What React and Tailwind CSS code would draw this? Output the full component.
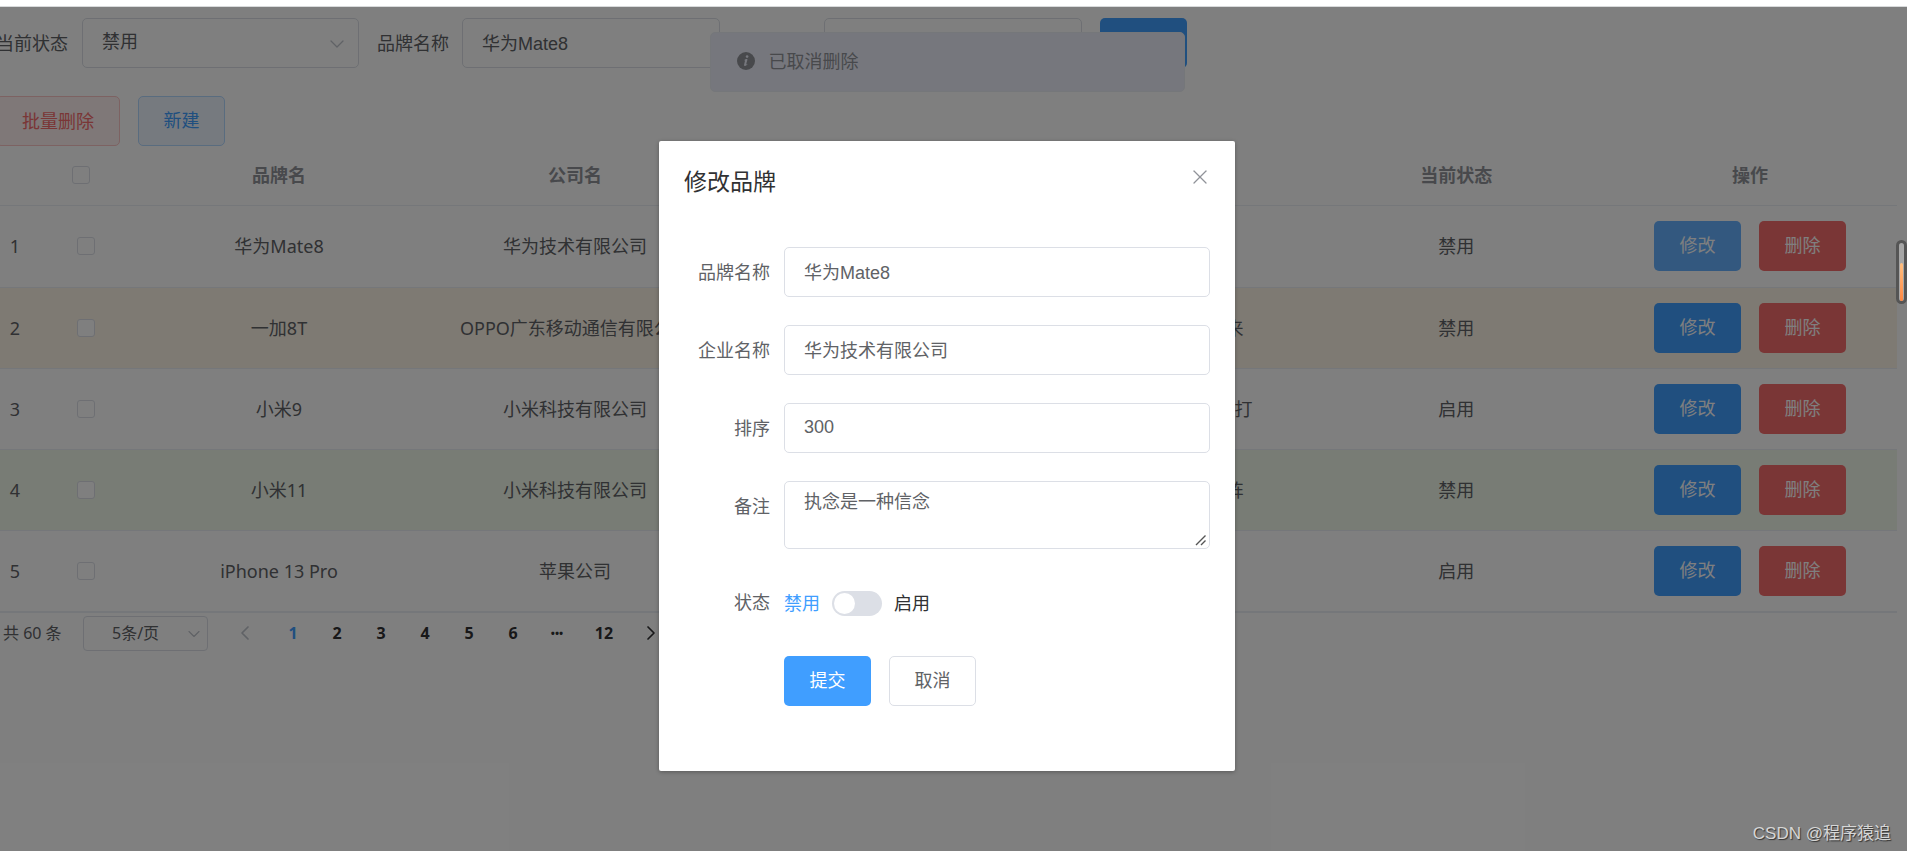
import { ChevronDown, ChevronLeft, ChevronRight, X } from "lucide-react";

const rows = [
  { id: 1, brand: "华为Mate8", company: "华为技术有限公司", order: 300, note: "执念是一种信念", status: "禁用", tone: "", edit: "bg-[#66b1ff]" },
  { id: 2, brand: "一加8T", company: "OPPO广东移动通信有限公司", order: 200, note: "手机行业期待着未来", status: "禁用", tone: "bg-[#fdf5e6]", edit: "bg-[#409eff]" },
  { id: 3, brand: "小米9", company: "小米科技有限公司", order: 100, note: "要问小米手机能不能打", status: "启用", tone: "", edit: "bg-[#409eff]" },
  { id: 4, brand: "小米11", company: "小米科技有限公司", order: 100, note: "小米高端旗舰的阵阵", status: "禁用", tone: "bg-[#f0f9eb]", edit: "bg-[#409eff]" },
  { id: 5, brand: "iPhone 13 Pro", company: "苹果公司", order: 100, note: "十三香", status: "启用", tone: "", edit: "bg-[#409eff]" },
];

const button = "h-[50px] w-[87px] shrink-0 rounded-[5px] pb-0.5 text-lg";
const field =
  "h-[50px] rounded-[5px] border border-[#dcdfe6] bg-white px-[19px] pb-0.5 font-['Liberation_Sans','Noto_Sans_CJK_SC',sans-serif] text-lg text-[#606266] outline-none";
const checkbox =
  "block size-[18px] appearance-none rounded-[3px] border border-[#dcdfe6] bg-white";

function Filters() {
  return (
    <form className="-ml-1 flex items-center text-[#606266]" onSubmit={(e) => e.preventDefault()}>
      <label htmlFor="f-status" className="whitespace-nowrap">当前状态</label>
      <div className="relative ml-3.5 w-[277px] shrink-0">
        <select id="f-status" defaultValue="禁用" className={field + " w-full appearance-none"}>
          <option>禁用</option>
          <option>启用</option>
        </select>
        <ChevronDown className="pointer-events-none absolute top-3.5 right-2.5 size-6 text-[#c0c4cc]" strokeWidth={1.3} />
      </div>
      <label htmlFor="f-brand" className="ml-[18px] whitespace-nowrap">品牌名称</label>
      <input id="f-brand" defaultValue="华为Mate8" className={field + " ml-[13px] w-[258px] shrink-0"} />
      <label htmlFor="f-company" className="ml-[18px] whitespace-nowrap">企业名称</label>
      <input id="f-company" className={field + " ml-3.5 w-[258px] shrink-0"} />
      <button className={button + " ml-[18px] bg-[#409eff] text-white"}>查询</button>
    </form>
  );
}

function BrandTable() {
  return (
    <table className="w-full table-fixed border-collapse text-center">
      <colgroup>
        <col className="w-[28px]" />
        <col className="w-[102px]" />
        <col className="w-[298px]" />
        <col />
        <col />
        <col />
        <col />
        <col />
      </colgroup>
      <thead>
        <tr className="h-[59px] border-b border-[#ebeef5] text-[#909399]">
          <th></th>
          <th>
            <input type="checkbox" aria-label="全选" className={checkbox + " ml-11"} />
          </th>
          <th>品牌名</th>
          <th>公司名</th>
          <th>排序</th>
          <th>描述</th>
          <th>当前状态</th>
          <th>操作</th>
        </tr>
      </thead>
      <tbody className="border-b-2 border-[#ebeef5] text-[#606266]">
        {rows.map((r) => (
          <tr key={r.id} className={"h-[81px] border-b border-[#ebeef5] first:h-[82px] last:h-[82px] " + r.tone}>
            <td className="pl-0.5">{r.id}</td>
            <td>
              <input type="checkbox" aria-label={r.brand} className={checkbox + " ml-[49px]"} />
            </td>
            <td>{r.brand}</td>
            <td>{r.company}</td>
            <td>{r.order}</td>
            <td>{r.note}</td>
            <td>{r.status}</td>
            <td>
              <div className="flex justify-center gap-[18px]">
                <button className={button + " text-white " + r.edit}>修改</button>
                <button className={button + " bg-[#f56c6c] text-white"}>删除</button>
              </div>
            </td>
          </tr>
        ))}
      </tbody>
    </table>
  );
}

function pageClass(p) {
  if (p === "1") return "w-11 text-[#409eff]";
  if (p === "•••") return "w-11 text-[11px]";
  if (p === "12") return "w-[50px]";
  return "w-11";
}

function Pagination() {
  return (
    <nav className="mt-0.5 flex h-9 items-center text-base font-bold text-[#303133]">
      <span className="ml-[3px] w-20 font-normal whitespace-nowrap text-[#606266]">共 60 条</span>
      <div className="relative w-[125px]">
        <select aria-label="每页条数" className="h-[35px] w-full appearance-none rounded-[4px] border border-[#dcdfe6] bg-white pl-7 text-base font-normal text-[#606266]">
          <option>5条/页</option>
        </select>
        <ChevronDown className="pointer-events-none absolute top-2 right-1 size-5 text-[#c0c4cc]" strokeWidth={1.4} />
      </div>
      <div className="ml-[15px] flex">
        <button aria-label="上一页" className="mr-1 flex w-11 items-center justify-center text-[#c0c4cc]">
          <ChevronLeft className="size-6" strokeWidth={1.7} />
        </button>
        {["1", "2", "3", "4", "5", "6", "•••", "12"].map((p) => (
          <button key={p} className={pageClass(p)}>
            {p}
          </button>
        ))}
        <button aria-label="下一页" className="flex w-11 items-center justify-center">
          <ChevronRight className="size-6" strokeWidth={1.7} />
        </button>
      </div>
    </nav>
  );
}

function Message() {
  return (
    <div role="alert" className="absolute inset-x-0 top-[25px] flex justify-center pr-[13px]">
      <div className="flex h-[60px] w-[475px] items-center gap-3.5 rounded-[5px] border border-[#ebeef5] bg-[#edeffa] pb-0.5 pl-[26px] text-[#909399]">
        <svg viewBox="0 0 18 18" className="size-[18px]">
          <circle cx="9" cy="9" r="9" fill="#909399" />
          <circle cx="10.1" cy="4.6" r="1.3" fill="#edeffa" />
          <path d="M7 8.2c1.2-1 2.6-1.5 3.2-1.1.5.4-.1 1.8-.5 3.2-.3 1.2-.6 2.2-.2 2.3.3.1.8-.3 1.2-.8-.7 1.5-2.1 2.4-3.1 2.1-.9-.3-.5-1.7-.1-3 .3-1.1.7-2.4.4-2.6-.2-.1-.6.1-.9.2z" fill="#edeffa" />
        </svg>
        <p>已取消删除</p>
      </div>
    </div>
  );
}

const label = "h-[50px] w-[86px] shrink-0 text-right leading-[50px]";

function Dialog() {
  return (
    <section role="dialog" aria-label="修改品牌" className="w-[576px] rounded-[2px] bg-white px-[25px] pb-[65px] text-[#606266] shadow-[0_1px_4px_rgba(0,0,0,0.3)]">
      <header className="flex h-[106px] items-start justify-between pt-6">
        <h2 className="text-[23px] leading-8 text-[#303133]">修改品牌</h2>
        <button aria-label="关闭" className="-mr-0.5 text-[#909399]">
          <X className="size-6" strokeWidth={1.3} />
        </button>
      </header>
      <form className="flex flex-col gap-7" onSubmit={(e) => e.preventDefault()}>
        <div className="flex gap-3.5">
          <label htmlFor="brand" className={label}>品牌名称</label>
          <input id="brand" defaultValue="华为Mate8" className={field + " min-w-0 flex-1"} />
        </div>
        <div className="flex gap-3.5">
          <label htmlFor="company" className={label}>企业名称</label>
          <input id="company" defaultValue="华为技术有限公司" className={field + " min-w-0 flex-1"} />
        </div>
        <div className="flex gap-3.5">
          <label htmlFor="order" className={label}>排序</label>
          <input id="order" defaultValue="300" className={field + " min-w-0 flex-1"} />
        </div>
        <div className="flex gap-3.5">
          <label htmlFor="note" className={label}>备注</label>
          <div className="relative min-w-0 flex-1">
            <textarea
              id="note"
              defaultValue="执念是一种信念"
              className="block h-[68px] w-full resize-none rounded-[5px] border border-[#dcdfe6] bg-white px-[19px] py-[5px] text-lg text-[#606266] outline-none"
            />
            <svg viewBox="0 0 12 12" className="pointer-events-none absolute right-[3px] bottom-[3px] size-3" stroke="#555" strokeWidth="1.4" fill="none">
              <path d="M1 11L10.500 1.500M6 11L10.500 6.500" />
            </svg>
          </div>
        </div>
        <div className="flex gap-3.5">
          <span className={label}>状态</span>
          <div className="flex h-[52px] items-center">
            <span className="text-[#409eff]">禁用</span>
            <button role="switch" aria-checked="false" aria-label="状态" className="mx-3 h-[25px] w-[50px] rounded-full bg-[#dcdfe6] p-0.5">
              <span className="block size-[21px] rounded-full bg-white" />
            </button>
            <span className="text-[#303133]">启用</span>
          </div>
        </div>
        <div className="-mt-px flex gap-[18px] pl-[100px]">
          <button className={button + " bg-[#409eff] text-white"}>提交</button>
          <button className={button + " border border-[#dcdfe6] bg-white"}>取消</button>
        </div>
      </form>
    </section>
  );
}

export default function App() {
  return (
    <div className="flex min-h-screen flex-col overflow-hidden bg-white font-['Noto_Sans','Noto_Sans_CJK_SC',sans-serif] text-lg">
      <div className="h-[7px] border-b border-[#d8dadb]" />
      <main className="relative flex-1 pt-[11px] pr-2.5">
        <Filters />
        <div className="mt-7 flex gap-[18px]">
          <button className="-ml-1 h-[50px] w-[124px] rounded-[5px] border border-[#fbc4c4] bg-[#fef0f0] text-[#f56c6c]">批量删除</button>
          <button className={button + " border border-[#b3d8ff] bg-[#ecf5ff] text-[#409eff]"}>新建</button>
        </div>
        <BrandTable />
        <Pagination />
        <Message />
        <div className="absolute inset-0 flex items-start justify-center bg-black/50 pt-[134px] pr-[13px]">
          <Dialog />
        </div>
        <div className="absolute top-[233px] right-0 flex h-16 w-[11px] flex-col justify-end rounded-full border-[3px] border-[#555] bg-[#a6a6a6]">
          <div className="mx-px h-[38px] rounded-full bg-linear-to-b from-[#ffbf80] to-[#ff8640]" />
        </div>
        <p className="absolute right-4 bottom-1 font-['Liberation_Sans','Noto_Sans_CJK_SC',sans-serif] text-[17px] text-[#d6d6d6] [text-shadow:1px_1px_1px_#333]">
          CSDN @程序猿追
        </p>
      </main>
    </div>
  );
}
